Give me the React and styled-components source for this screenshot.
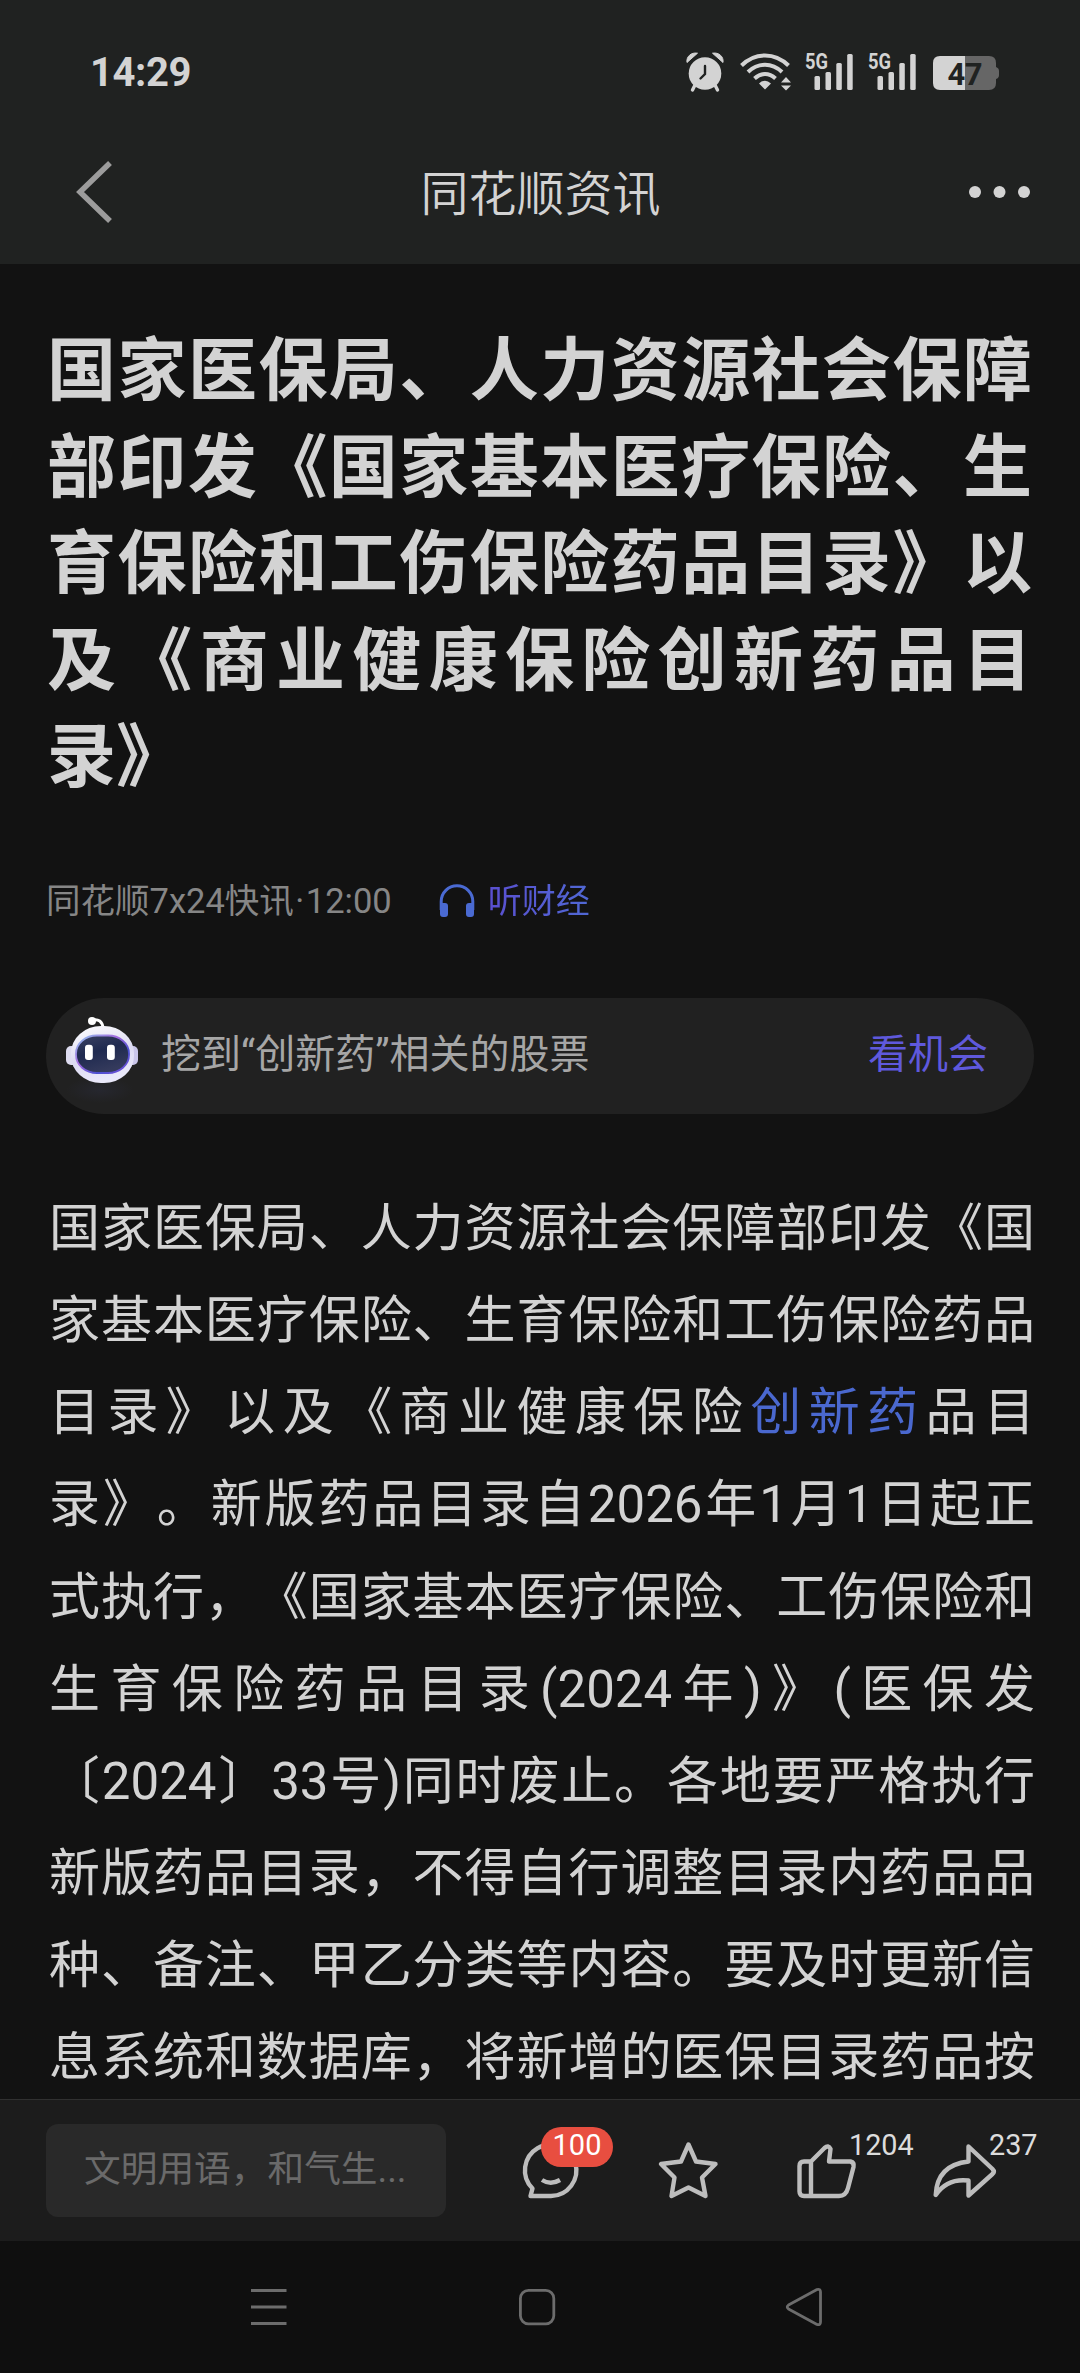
import styled, { createGlobalStyle } from "styled-components";

const GlobalStyle = createGlobalStyle`
    * {
        box-sizing: border-box;
    }
    body {
        margin: 0;
        background: #121212;
        font-family: Roboto, "Noto Sans CJK SC", sans-serif;
        color: #d3d3d3;
        text-spacing-trim: space-all;
    }
`

const Screen = styled.div`
    display: flex;
    flex-direction: column;
    width: 1080px;
    height: 2373px;
    overflow: hidden;
    background: #121212;
`
const Top = styled.header`
    height: 264px;
    background: #202221;
`
const StatusBar = styled.div`
    display: flex;
    align-items: center;
    height: 122px;
    padding: 22px 80px 0 90px;
`
const Clock = styled.span`
    flex: 1;
    margin-top: 2px;
    font-size: 40px;
    font-weight: 700;
    letter-spacing: -0.4px;
    line-height: 44px;
`
const StatusIcons = styled.div`
    display: flex;
    align-items: center;
`
const StatusIcon = styled.svg`
    display: block;
    overflow: visible;
    margin-left: ${p => p.$gap || 0}px;
    fill: #d3d3d3;
`
const TitleBar = styled.div`
    display: flex;
    align-items: center;
    justify-content: space-between;
    height: 142px;
    padding: 0 49px 0 76px;
`
const PageName = styled.h2`
    margin: 3px 0 0;
    font-size: 48px;
    font-weight: 350;
    line-height: 60px;
`
const MoreIcon = styled.svg`
    margin-bottom: 3px;
    fill: #d3d3d3;
`
const Article = styled.main`
    height: 1835px;
    overflow: hidden;
    padding: 60px 46px 0;
`
const Headline = styled.h1`
    margin: 0;
    padding: 0 2px 0 1px;
    font-size: 69px;
    font-weight: 700;
    line-height: 96.6px;
`
const Line = styled.span`
    display: block;
    white-space: nowrap;
    text-align: justify;
    text-align-last: ${p => p.$last ? "left" : "justify"};
`
const Meta = styled.div`
    display: flex;
    align-items: center;
    margin-top: 69px;
    height: 50px;
    font-size: 34.5px;
    line-height: 50px;
    color: #868686;
`
const Dot = styled.span`
    margin: 0 1.5px;
`
const Listen = styled.span`
    display: flex;
    align-items: center;
    gap: 13px;
    margin-left: 47px;
    font-size: 34px;
`
const ListenText = styled.span`
    background: linear-gradient(90deg, #5a4fd0, #5068d4);
    background-clip: text;
    color: transparent;
`
const Chance = styled.div`
    display: flex;
    align-items: center;
    margin-top: 72px;
    height: 116px;
    padding: 0 46px 0 16px;
    border-radius: 58px;
    background: #212121;
    font-size: 40px;
    line-height: 58px;
    color: #a6a6a6;
`
const ChanceText = styled.span`
    flex: 1;
    margin-left: 13px;
    padding-bottom: 2px;
`
const ChanceLink = styled.span`
    padding-bottom: 2px;
    color: #5f59dc;
`
const Body = styled.p`
    margin: 69px -1px 0 0;
    padding: 0 0 0 3px;
    font-size: 51px;
    line-height: 92.15px;
`
const Keyword = styled.span`
    color: #4a68cf;
`
const ActionBar = styled.footer`
    display: flex;
    align-items: center;
    height: 142px;
    padding-left: 46px;
    border-top: 1px solid #303030;
    background: #1c1c1c;
`
const CommentInput = styled.div`
    width: 400px;
    height: 93px;
    padding-left: 38px;
    border-radius: 12px;
    background: #292929;
    color: #6a6a6a;
    font-size: 36.7px;
    line-height: 92px;
`
const Actions = styled.div`
    display: flex;
    margin-left: 69px;
`
const Action = styled.div`
    position: relative;
    width: 138px;
    height: 70px;

    svg {
        display: block;
        fill: none;
        stroke: #bdbdbd;
        stroke-width: 4.4;
        stroke-linejoin: round;
    }
`
const Count = styled.span`
    position: absolute;
    left: ${p => p.$left}px;
    top: -8px;
    font-size: 28.8px;
    line-height: 34px;
    color: #dcdcdc;
`
const Badge = styled.span`
    position: absolute;
    left: 26px;
    top: -9px;
    width: 72px;
    height: 40px;
    border-radius: 20px;
    background: #e84e40;
    color: #fff;
    font-size: 29px;
    line-height: 37px;
    text-align: center;
`
const NavBar = styled.nav`
    display: flex;
    align-items: center;
    justify-content: space-between;
    height: 132px;
    padding: 0 256px 0 249px;
    background: #0f0f0f;

    svg {
        fill: none;
        stroke: #6c6c6c;
        stroke-width: 2.8;
        stroke-linejoin: round;
    }
`

const headline = [
    "国家医保局、人力资源社会保障",
    "部印发《国家基本医疗保险、生",
    "育保险和工伤保险药品目录》以",
    "及《商业健康保险创新药品目",
    "录》",
]

const body = [
    "国家医保局、人力资源社会保障部印发《国",
    "家基本医疗保险、生育保险和工伤保险药品",
    <>目录》以及《商业健康保险<Keyword>创新药</Keyword>品目</>,
    "录》。新版药品目录自2026年1月1日起正",
    "式执行，《国家基本医疗保险、工伤保险和",
    "生育保险药品目录(2024年)》(医保发",
    "〔2024〕33号)同时废止。各地要严格执行",
    "新版药品目录，不得自行调整目录内药品品",
    "种、备注、甲乙分类等内容。要及时更新信",
    "息系统和数据库，将新增的医保目录药品按",
]

const Alarm = () => (
    <StatusIcon width="38" height="40" viewBox="0 0 38 40">
        <path d="M1 10.5C0 5 5 0 11.5 1.2Z M37 10.5C38 5 33 0 26.5 1.2Z" stroke="#d3d3d3" strokeLinejoin="round" />
        <path d="M9 33L6.5 38M29 33L31.5 38" stroke="#d3d3d3" strokeWidth="3.4" strokeLinecap="round" />
        <circle cx="19" cy="21.5" r="16.3" />
        <path d="M19 14V22L14.5 26.5" fill="none" stroke="#202221" strokeWidth="2.4" strokeLinecap="round" />
    </StatusIcon>
)

const Wifi = () => (
    <StatusIcon $gap={16} width="52" height="40" viewBox="0 0 52 40">
        <g fill="none" stroke="#d3d3d3" strokeWidth="4">
            <path d="M1.5 13.5C15 0 35 0 48.5 13.5" />
            <path d="M8 20C18 10.3 32 10.3 42 20" />
            <path d="M14.5 26.5C21 20.5 29 20.5 35.5 26.5" />
        </g>
        <path d="M19 31.5Q25 26 31 31.5L25 37.5Z M41 30.5L46 25L51 30.5Z M41 33.5H51L46 38.5Z" />
    </StatusIcon>
)

const Signal = () => (
    <StatusIcon $gap={13} width="50" height="40" viewBox="0 0 50 40">
        <text x="0" y="17" fontSize="22.5" fontWeight="700" textLength="23" lengthAdjust="spacingAndGlyphs">5G</text>
        <rect x="9.5" y="24" width="5.5" height="14" rx="1.5" />
        <rect x="20.5" y="20" width="5.5" height="18" rx="1.5" />
        <rect x="31.3" y="11" width="5.5" height="27" rx="1.5" />
        <rect x="42.2" y="2" width="5.5" height="36" rx="1.5" />
    </StatusIcon>
)

const Battery = () => (
    <StatusIcon $gap={15} width="67" height="40" viewBox="0 0 67 40">
        <path d="M32 4H56Q63 4 63 11V15Q66 16 66 19V23Q66 26 63 27V31Q63 38 56 38H32Z" fill="#666" />
        <path d="M32 4H7Q0 4 0 11V31Q0 38 7 38H32Z" />
        <text x="14.5" y="32.5" fontSize="31" fontWeight="700" fill="#202221" textLength="35">47</text>
    </StatusIcon>
)

const Robot = () => (
    <svg width="86" height="100" viewBox="0 0 86 100">
        <defs>
            <linearGradient id="shell" x1="0" y1="0" x2="0.3" y2="1">
                <stop offset="0" stopColor="#fff" />
                <stop offset="0.6" stopColor="#dcdaf2" />
                <stop offset="1" stopColor="#e9e8fa" />
            </linearGradient>
            <linearGradient id="rim" x1="0" y1="0" x2="1" y2="1">
                <stop offset="0" stopColor="#8fc5ee" />
                <stop offset="0.4" stopColor="#a56be0" />
                <stop offset="0.7" stopColor="#4a4fd0" />
                <stop offset="1" stopColor="#7a50d8" />
            </linearGradient>
            <linearGradient id="face" x1="0" y1="0" x2="0.4" y2="1">
                <stop offset="0" stopColor="#3b4263" />
                <stop offset="0.5" stopColor="#1f2a50" />
                <stop offset="1" stopColor="#343a5c" />
            </linearGradient>
            <radialGradient id="glow">
                <stop offset="0" stopColor="#26272f" />
                <stop offset="1" stopColor="#212121" />
            </radialGradient>
        </defs>
        <ellipse cx="38" cy="84" rx="34" ry="13" fill="url(#glow)" />
        <circle cx="30" cy="15" r="4" fill="#fff" />
        <path d="M30 14Q40 12 41 22" fill="none" stroke="#fff" strokeWidth="3" />
        <rect x="4" y="40" width="12" height="19" rx="5" fill="#dedcf0" />
        <rect x="64" y="40" width="12" height="19" rx="5" fill="#c9c5ea" />
        <rect x="9" y="20" width="63" height="57" rx="30" ry="27" fill="url(#shell)" />
        <rect x="14" y="29.5" width="53" height="37.5" rx="21" ry="18" fill="url(#face)" stroke="url(#rim)" strokeWidth="1.8" />
        <rect x="23" y="38.7" width="7.8" height="15.3" rx="3" fill="#fff" />
        <rect x="45" y="38.7" width="7.8" height="15.3" rx="3" fill="#fff" />
    </svg>
)

const App = () => {
    return (
        <Screen>
            <GlobalStyle />
            <Top>
                <StatusBar>
                    <Clock>14:29</Clock>
                    <StatusIcons>
                        <Alarm />
                        <Wifi />
                        <Signal />
                        <Signal />
                        <Battery />
                    </StatusIcons>
                </StatusBar>
                <TitleBar>
                    <svg width="36" height="64" viewBox="0 0 36 64">
                        <path d="M34 2L4 31L34 60" fill="none" stroke="#9c9c9c" strokeWidth="5.5" />
                    </svg>
                    <PageName>同花顺资讯</PageName>
                    <MoreIcon width="62" height="12" viewBox="0 0 62 12">
                        <circle cx="6" cy="6" r="6" />
                        <circle cx="30.5" cy="6" r="6" />
                        <circle cx="55" cy="6" r="6" />
                    </MoreIcon>
                </TitleBar>
            </Top>

            <Article>
                <Headline>
                    {headline.map((l, i) => (
                        <Line key={i} $last={i === headline.length - 1}>{l}</Line>
                    ))}
                </Headline>
                <Meta>
                    <span>同花顺7x24快讯<Dot>·</Dot>12:00</span>
                    <Listen>
                        <svg width="36" height="34" viewBox="0 0 36 34">
                            <path d="M2.2 26V17.5A15.8 15.8 0 0 1 33.8 17.5V26" fill="none" stroke="#4a6ad2" strokeWidth="3" />
                            <path d="M1 19H6Q9 19 9 22V30Q9 33 6 33H4Q1 33 1 30Z M35 19H30Q27 19 27 22V30Q27 33 30 33H32Q35 33 35 30Z" fill="#4a6ad2" />
                        </svg>
                        <ListenText>听财经</ListenText>
                    </Listen>
                </Meta>
                <Chance>
                    <Robot />
                    <ChanceText>挖到“创新药”相关的股票</ChanceText>
                    <ChanceLink>看机会</ChanceLink>
                </Chance>
                <Body>
                    {body.map((l, i) => <Line key={i}>{l}</Line>)}
                </Body>
            </Article>

            <ActionBar>
                <CommentInput>文明用语，和气生...</CommentInput>
                <Actions>
                    <Action>
                        <svg width="70" height="70" viewBox="0 0 70 70">
                            <path d="M36 60H15.5L17.5 52.5A25.7 25.7 0 1 1 36 60Z" />
                            <path d="M27 44Q35.5 49.5 45 44" />
                        </svg>
                        <Badge>100</Badge>
                    </Action>
                    <Action>
                        <svg width="70" height="70" viewBox="0 0 70 70">
                            <path d="M35.5 8.5L43 25.5L62.5 28L49 41.5L52.5 60L35.5 51.5L18.5 60L21.5 41.5L8 28L28 25.5Z" />
                        </svg>
                    </Action>
                    <Action>
                        <svg width="70" height="70" viewBox="0 0 70 70">
                            <path d="M20 25.5V60M20 25.5L33.5 12Q37.5 8.5 39.5 13L38 25.5H59.5Q63.5 26.5 62.5 31L57 52Q55 60 48 60H13Q8.5 60 8.5 55.5V30Q8.5 25.5 13 25.5Z" />
                        </svg>
                        <Count $left={58}>1204</Count>
                    </Action>
                    <Action>
                        <svg width="70" height="70" viewBox="0 0 70 70">
                            <path d="M39.5 10.5L63.5 33Q66 35.5 63.5 38L39.5 59.5V44.5Q18 42 6.7 59Q8 29 39.5 25.5Z" />
                        </svg>
                        <Count $left={60}>237</Count>
                    </Action>
                </Actions>
            </ActionBar>

            <NavBar>
                <svg width="40" height="40" viewBox="0 0 40 40">
                    <path d="M2 3.5H37.5M2 20H37.5M2 36.5H37.5" />
                </svg>
                <svg width="40" height="40" viewBox="0 0 40 40">
                    <rect x="3.4" y="3.4" width="33.4" height="33.4" rx="8" />
                </svg>
                <svg width="40" height="40" viewBox="0 0 40 40">
                    <path d="M4.5 18Q2 20 4.5 22L33 37.5Q36.5 38.5 36.5 35V5Q36.5 1.5 33 2.5Z" />
                </svg>
            </NavBar>
        </Screen>
    )
}

export default App
